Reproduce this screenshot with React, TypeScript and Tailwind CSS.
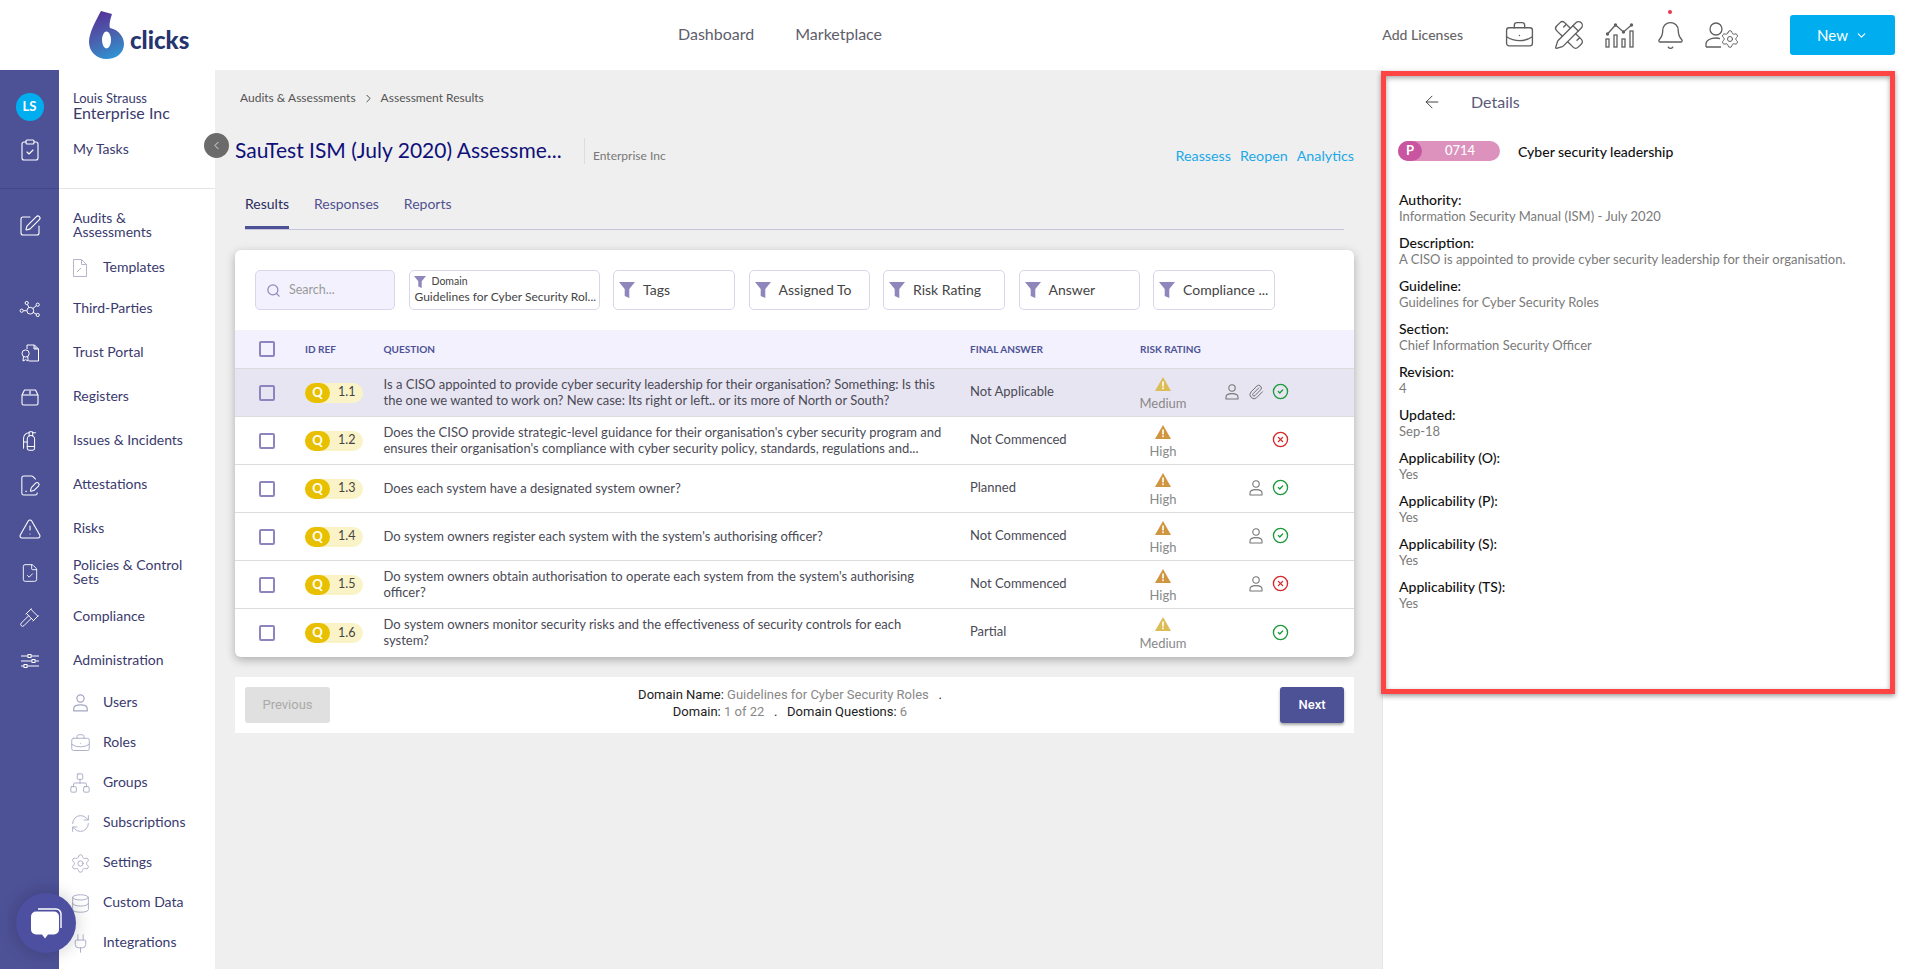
import React from "react";
import {
  BriefcaseBusiness, PencilRuler, Bell, Settings, ChevronDown, ChevronLeft, ChevronRight, ClipboardCheck, SquarePen,
  FireExtinguisher, TriangleAlert, FileCheck, Gavel, Network, RefreshCw, Database, Plug,
  Search, Paperclip, CircleCheck, CircleX, ArrowLeft, FileSignature,
} from "lucide-react";

const railIcon = "text-white";

function Funnel({ small }: { small?: boolean }) {
  return (
    <svg viewBox="0 0 16 16" className={small ? "w-[12px] h-[12px] shrink-0" : "w-[16px] h-[16px] shrink-0"}>
      <path d="M0 0h16L10.3 7v9L5.7 14V7z" fill="#8f87bb" />
    </svg>
  );
}

function Warn({ color }: { color: string }) {
  return (
    <svg viewBox="0 0 16 14" className="w-[16px] h-[14px]">
      <path d="M8 0L16 14H0z" fill={color} />
      <rect x="7.2" y="4.5" width="1.6" height="5" fill="#fff" />
      <rect x="7.2" y="10.5" width="1.6" height="1.6" fill="#fff" />
    </svg>
  );
}

function Person({ stroke = "#777", big }: { stroke?: string; big?: boolean }) {
  return (
    <svg viewBox="0 0 14 16" className={big ? "w-[17px] h-[18px]" : "w-[14px] h-[16px]"} fill="none" stroke={stroke} strokeWidth="1.1">
      <circle cx="7" cy="4" r="3.2" />
      <path d="M1 15v-2c0-2 2.5-3.4 6-3.4s6 1.4 6 3.4v2z" strokeLinejoin="round" />
    </svg>
  );
}

function NetworkIcon() {
  return (
    <svg viewBox="18 301 21 18" className="w-[21px] h-[18px]" fill="none" stroke="#fff" strokeWidth="1">
      <circle cx="29.3" cy="311.7" r="3.4" />
      <circle cx="25.7" cy="304" r="1.6" />
      <circle cx="36.7" cy="305.7" r="1.6" />
      <circle cx="36.7" cy="316" r="1.6" />
      <circle cx="20.7" cy="311.7" r="1.6" />
      <path d="M26.5 305.5l1.4 3M35.4 306.7l-3.6 2.8M35.3 315.2l-3.4-2M22.4 311.7h3.5" />
    </svg>
  );
}

function TrustIcon() {
  return (
    <svg viewBox="0 0 18 18" className="w-[18px] h-[18px]" fill="none" stroke="#fff" strokeWidth="1">
      <path d="M6 5V1h7.5L17.5 5v12H8" />
      <path d="M13.5 1v4h4" fill="#b9bbdd" stroke="none" />
      <path d="M13 1v4h4.5" />
      <circle cx="4.6" cy="9.5" r="3.6" />
      <path d="M2.5 12.5L2 17l2.6-1.3L7.2 17l-.5-4.5" />
    </svg>
  );
}

function BoxIcon() {
  return (
    <svg viewBox="0 0 18 17" className="w-[18px] h-[17px]" fill="none" stroke="#fff" strokeWidth="1.1">
      <path d="M1 6L3.5 1h11L17 6v8.5a1.5 1.5 0 0 1-1.5 1.5h-13A1.5 1.5 0 0 1 1 14.5z" strokeLinejoin="round" />
      <path d="M1 6h16" />
      <rect x="8" y="1" width="2" height="5" fill="#b9bbdd" stroke="none" />
    </svg>
  );
}

function SlidersIcon() {
  return (
    <svg viewBox="0 0 18 14" className="w-[18px] h-[14px]" fill="none" stroke="#fff" strokeWidth="1">
      <path d="M0 2h7M10 2h8M0 7h11M14 7h4M0 12h3M6 12h12" />
      <rect x="7" y="0.5" width="3" height="3" />
      <rect x="11" y="5.5" width="3" height="3" />
      <rect x="3" y="10.5" width="3" height="3" />
    </svg>
  );
}

function RowItem({ icon, sub, h, children, cls }: { icon?: React.ReactNode; sub?: React.ReactNode; h: string; children?: React.ReactNode; cls?: string }) {
  return (
    <div className={`flex shrink-0 ${h}`}>
      <div className={`w-[59px] shrink-0 bg-[#4d5196] flex items-center justify-center ${cls ?? ""}`}>{icon}</div>
      <div className={`flex-1 flex items-center text-[14px] leading-[14px] text-[#3a3a6e] ${cls ?? ""} ${sub ? "" : "pl-[14px]"}`}>
        {sub ? (
          <>
            <div className="w-[40px] pl-[2px] flex justify-center text-[#a4a6c2] shrink-0">{sub}</div>
            <div className="pl-[4px] relative -top-px">{children}</div>
          </>
        ) : (
          <div className="relative -top-px">{children}</div>
        )}
      </div>
    </div>
  );
}

function Sidebar() {
  return (
    <aside className="w-[215px] shrink-0 flex flex-col bg-white">
      <div className="flex h-[59px] shrink-0">
        <div className="w-[59px] bg-[#4d5196] pt-[23px] flex justify-center">
          <div className="w-[28px] h-[28px] rounded-full bg-[#00aeef] text-white text-[13px] font-bold flex items-center justify-center">LS</div>
        </div>
        <div className="pl-[14px] pt-[21px] text-[#3a3a6e]">
          <div className="text-[13px] leading-[14px]">Louis Strauss</div>
          <div className="text-[16px] leading-[16px]">Enterprise Inc</div>
        </div>
      </div>
      <RowItem h="h-[42px]" icon={<ClipboardCheck size={24} strokeWidth={1.1} className={railIcon} />}>My Tasks</RowItem>
      <div className="flex h-[18px] shrink-0 border-b border-[#e3e3e8]">
        <div className="w-[59px] bg-[#4d5196] -mb-px border-b border-[#44478a]" />
      </div>
      <RowItem h="h-[59px]" cls="pt-[15px]" icon={<SquarePen size={24} strokeWidth={1.1} className={railIcon} />}>
        <span>Audits &amp;<br />Assessments</span>
      </RowItem>
      <RowItem
        h="h-[39px]"
        sub={
          <svg viewBox="0 0 14 18" className="w-[14px] h-[18px]" fill="none" stroke="#b4b6cc" strokeWidth="1">
            <path d="M.5.5h8l5 5v12H.5z" />
            <path d="M8.5.5v5h5M4 13l4-4" />
          </svg>
        }
      >
        Templates
      </RowItem>
      <RowItem h="h-[44px]" icon={<NetworkIcon />}>Third-Parties</RowItem>
      <RowItem h="h-[44px]" icon={<TrustIcon />}>Trust Portal</RowItem>
      <RowItem h="h-[44px]" icon={<BoxIcon />}>Registers</RowItem>
      <RowItem h="h-[44px]" icon={<FireExtinguisher size={22} strokeWidth={1.1} className={railIcon} />}>Issues &amp; Incidents</RowItem>
      <RowItem h="h-[44px]" icon={<FileSignature size={23} strokeWidth={1.1} className={railIcon} />}>Attestations</RowItem>
      <RowItem h="h-[44px]" icon={<TriangleAlert size={24} strokeWidth={1.1} className={railIcon} />}>Risks</RowItem>
      <RowItem h="h-[44px]" icon={<FileCheck size={20} strokeWidth={1.1} className={railIcon} />}>
        <span>Policies &amp; Control<br />Sets</span>
      </RowItem>
      <RowItem h="h-[44px]" icon={<Gavel size={21} strokeWidth={1.1} className={railIcon} />}>Compliance</RowItem>
      <RowItem h="h-[44px]" icon={<SlidersIcon />}>Administration</RowItem>
      <RowItem h="h-[40px]" sub={<Person stroke="#a4a6c2" big />}>Users</RowItem>
      <RowItem h="h-[40px]" sub={<BriefcaseBusiness size={21} strokeWidth={1} />}>Roles</RowItem>
      <RowItem h="h-[40px]" sub={<Network size={22} strokeWidth={1} />}>Groups</RowItem>
      <RowItem h="h-[40px]" sub={<RefreshCw size={21} strokeWidth={1} />}>Subscriptions</RowItem>
      <RowItem h="h-[40px]" sub={<Settings size={21} strokeWidth={1} />}>Settings</RowItem>
      <RowItem h="h-[40px]" sub={<Database size={21} strokeWidth={1} />}>Custom Data</RowItem>
      <RowItem h="h-[40px]" sub={<Plug size={21} strokeWidth={1} />}>Integrations</RowItem>
      <div className="flex flex-1"><div className="w-[59px] bg-[#4d5196]" /></div>
    </aside>
  );
}

function Header() {
  return (
    <header className="h-[70px] flex items-center bg-white shrink-0 pr-[25px]">
      <div className="w-[678px] shrink-0 pl-[89px] flex items-start h-full pt-[11px]">
        <svg viewBox="0 0 35 48" className="w-[35px] h-[48px] shrink-0">
          <defs>
            <linearGradient id="lg" x1="0.3" y1="0" x2="0.6" y2="1">
              <stop offset="0" stopColor="#55319a" />
              <stop offset="0.55" stopColor="#4a62ae" />
              <stop offset="1" stopColor="#2f92d2" />
            </linearGradient>
          </defs>
          <path d="M12 0L23 3C21 9 20 14 21 17C30 19 35 26 35 33C35 42 27 48 17.5 48C8 48 0 41 0 31C0 22 7 9 12 0Z" fill="url(#lg)" />
          <ellipse cx="17.5" cy="29" rx="4.5" ry="8.5" fill="#fff" />
        </svg>
        <span className="ml-[6px] mt-[17px] text-[24px] leading-[24px] font-black text-[#25346f]">clicks</span>
      </div>
      <nav className="flex gap-[41px] text-[16px] text-[#5e5e6c] relative -top-px">
        <span>Dashboard</span>
        <span>Marketplace</span>
      </nav>
      <div className="ml-auto flex items-center">
        <span className="text-[14px] font-medium text-[#666] mr-[31px] relative -top-px">Add Licenses</span>
        <div className="flex items-center text-[#5f5f5f] mr-[39px]">
          <div className="w-[50px] flex justify-center"><BriefcaseBusiness size={31} strokeWidth={1.05} /></div>
          <div className="w-[49px] flex justify-center"><PencilRuler size={32} strokeWidth={1} /></div>
          <div className="w-[54px] flex justify-center">
            <svg viewBox="0 0 30 26" className="w-[30px] h-[26px]" fill="none" stroke="#5f5f5f" strokeWidth="1.3">
              <rect x="1" y="17" width="3" height="8" />
              <rect x="9" y="13" width="3" height="12" />
              <rect x="17" y="17" width="3" height="8" />
              <rect x="25" y="9" width="3" height="16" />
              <path d="M2.5 12L10.5 3L18.5 10L26.5 3" />
              <circle cx="2.5" cy="12" r="1" fill="#5f5f5f" />
              <circle cx="10.5" cy="3" r="1" fill="#5f5f5f" />
              <circle cx="18.5" cy="10" r="1" fill="#5f5f5f" />
              <circle cx="26.5" cy="3" r="1" fill="#5f5f5f" />
            </svg>
          </div>
          <div className="w-[46px] flex justify-center relative">
            <Bell size={31} strokeWidth={1.05} />
            <div className="absolute left-[21px] -top-[10px] w-[4px] h-[4px] rounded-full bg-[#ee3350]" />
          </div>
          <div className="w-[58px] flex justify-center">
            <div className="relative w-[34px] h-[26px]">
              <svg viewBox="0 0 34 26" className="w-[34px] h-[26px]" fill="none" stroke="#5f5f5f" strokeWidth="1.3">
                <circle cx="11" cy="7" r="6" />
                <path d="M1 25v-3c0-4 5-6 10-6 2 0 3 .3 4 .6M1 25h15" />
              </svg>
              <Settings size={20} strokeWidth={1.2} className="absolute -right-[1px] -bottom-[1px]" />
            </div>
          </div>
        </div>
        <button className="w-[105px] h-[40px] rounded-[3px] bg-[#00aeef] text-white text-[15px] flex items-center justify-center gap-[7px]">
          New <ChevronDown size={13} strokeWidth={2} />
        </button>
      </div>
    </header>
  );
}

const rows = [
  { id: "1.1", q: "Is a CISO appointed to provide cyber security leadership for their organisation? Something: Is this the one we wanted to work on? New case: Its right or left.. or its more of North or South?", a: "Not Applicable", r: "Medium", user: true, clip: true, ok: true, active: true },
  { id: "1.2", q: "Does the CISO provide strategic-level guidance for their organisation's cyber security program and ensures their organisation's compliance with cyber security policy, standards, regulations and...", a: "Not Commenced", r: "High", ok: false },
  { id: "1.3", q: "Does each system have a designated system owner?", a: "Planned", r: "High", user: true, ok: true },
  { id: "1.4", q: "Do system owners register each system with the system's authorising officer?", a: "Not Commenced", r: "High", user: true, ok: true },
  { id: "1.5", q: "Do system owners obtain authorisation to operate each system from the system's authorising officer?", a: "Not Commenced", r: "High", user: true, ok: false },
  { id: "1.6", q: "Do system owners monitor security risks and the effectiveness of security controls for each system?", a: "Partial", r: "Medium", ok: true },
];

function Check() {
  return <div className="w-[16px] h-[16px] border-2 border-[#8f83c0] rounded-[2px] bg-transparent" />;
}

function FilterBox({ w, label }: { w: string; label: string }) {
  return (
    <div className={`${w} h-[40px] shrink-0 border border-[#d9d6ec] rounded-[5px] flex items-center pl-[5px] gap-[8px] text-[14px] text-[#444]`}>
      <Funnel />
      <span className="relative -top-px">{label}</span>
    </div>
  );
}

const gridCls = "grid grid-cols-[70px_78.5px_586.5px_170px_46px_34px_24px_24px_24px] items-center";

function Table() {
  return (
    <div>
      <div className={`${gridCls} h-[39px] bg-[#f3f1fd] border-b border-[#dcdcdc] text-[10px] font-bold text-[#4d5196] uppercase`}>
        <div className="pl-[24px]"><Check /></div>
        <div>ID Ref</div>
        <div>Question</div>
        <div>Final Answer</div>
        <div className="whitespace-nowrap">Risk Rating</div>
      </div>
      {rows.map((r, i) => (
        <div key={r.id} className={`${gridCls} h-[48px] ${i < rows.length - 1 ? "border-b border-[#dddddd]" : ""} ${r.active ? "bg-[#e8e5f2]" : ""}`}>
          <div className="pl-[24px]"><Check /></div>
          <div className="w-[58px] h-[20px] rounded-full bg-[#fbf3c8] flex items-center">
            <div className="w-[25px] h-[20px] rounded-full bg-[#e8c000] text-white text-[13px] font-bold flex items-center justify-center">Q</div>
            <div className="pl-[8px] text-[12.5px] text-[#444]">{r.id}</div>
          </div>
          <div className="w-[562px] text-[13px] leading-[16px] text-[#4a4a55] relative -top-px">{r.q}</div>
          <div className="text-[13px] text-[#4a4a55] relative -top-px">{r.a}</div>
          <div className="flex flex-col items-center gap-[4px] whitespace-nowrap relative top-[1px]">
            <Warn color={r.r === "Medium" ? "#dcbc55" : "#cf9540"} />
            <div className="text-[13px] leading-[16px] text-[#888]">{r.r}</div>
          </div>
          <div />
          <div className="flex justify-center relative -top-px">{r.user && r.clip ? <Person /> : null}</div>
          <div className="flex justify-center relative -top-px">
            {r.clip ? <Paperclip size={16} strokeWidth={1.5} className="text-[#6f6f6f]" /> : r.user ? <Person /> : null}
          </div>
          <div className="flex justify-center relative -top-px">
            {r.ok ? <CircleCheck size={17} strokeWidth={1.9} className="text-[#1a9a3a]" /> : <CircleX size={17} strokeWidth={1.9} className="text-[#d62828]" />}
          </div>
        </div>
      ))}
    </div>
  );
}

function Main() {
  return (
    <main className="relative flex-1 min-w-0 bg-[#efefef] pl-[20px] pr-[28px]">
      <button className="absolute -left-[11.5px] top-[62.5px] w-[25px] h-[25px] rounded-full bg-[#6b6b6b] text-white flex items-center justify-center z-10">
        <ChevronLeft size={13} strokeWidth={1.4} />
      </button>
      <div className="mt-[20px] pl-[5px] h-[16px] flex items-center text-[12px] text-[#555]">
        <span>Audits &amp; Assessments</span>
        <ChevronRight size={13} strokeWidth={1.6} className="mx-[6px] text-[#333]" />
        <span>Assessment Results</span>
      </div>
      <div className="mt-[25px] h-[40px] flex items-center relative -top-px">
        <h1 className="text-[21px] text-[#10107a] w-[349px] whitespace-nowrap shrink-0">SauTest ISM (July 2020) Assessme...</h1>
        <div className="border-l border-[#dcdcdc] h-[26px] mt-[2px] pl-[8px] pt-[10px] text-[12px] leading-[16px] text-[#777]">Enterprise Inc</div>
        <div className="ml-auto flex gap-[9px] text-[14.3px] text-[#1ba9e8] pt-[12px]">
          <span>Reassess</span>
          <span>Reopen</span>
          <span>Analytics</span>
        </div>
      </div>
      <div className="mt-[10px] mx-[10px] h-[49px] border-b border-[#c5c5dc] flex gap-[25px] text-[14px]">
        <div className="relative h-[44px] flex items-center text-[#2b2b5e]">
          Results
          <div className="absolute left-0 right-0 -bottom-[4px] h-[3px] bg-[#4d5196]" />
        </div>
        <div className="h-[44px] flex items-center text-[#52528f]">Responses</div>
        <div className="h-[44px] flex items-center text-[#52528f]">Reports</div>
      </div>
      <section className="mt-[20px] bg-white rounded-[6px] shadow-[0_3px_10px_rgba(0,0,0,0.28)] overflow-hidden">
        <div className="flex gap-[13.5px] pl-[20px] pt-[20px] pb-[20px]">
          <div className="w-[140px] h-[40px] shrink-0 border border-[#d9d6ec] rounded-[5px] bg-[#f3f1fd] flex items-center pl-[10px] gap-[8px]">
            <Search size={15} strokeWidth={2} className="text-[#8f87bb]" />
            <span className="text-[12.5px] text-[#9a9a9a]">Search...</span>
          </div>
          <div className="w-[191px] h-[40px] shrink-0 border border-[#d9d6ec] rounded-[5px] pl-[4px] text-[#444]">
            <div className="flex items-center gap-[6px] pt-[3px] h-[18px] text-[10.5px]"><Funnel small /><span>Domain</span></div>
            <div className="pl-[1px] text-[12px] leading-[17px] whitespace-nowrap relative -top-px">Guidelines for Cyber Security Rol...</div>
          </div>
          <FilterBox w="w-[122px]" label="Tags" />
          <FilterBox w="w-[121px]" label="Assigned To" />
          <FilterBox w="w-[122px]" label="Risk Rating" />
          <FilterBox w="w-[121px]" label="Answer" />
          <FilterBox w="w-[122px]" label="Compliance ..." />
        </div>
        <Table />
      </section>
      <div className="mt-[20px] h-[56px] bg-white flex items-center justify-between px-[10px] [font-family:Roboto,sans-serif]">
        <button className="w-[85px] h-[36px] rounded-[3px] bg-[#e0e0e0] text-[13px] text-[#aaaaaa]">Previous</button>
        <div className="text-center text-[13px] leading-[17px] text-[#222] pr-[30px] relative -top-[2px]">
          <div>Domain Name: <span className="text-[#888]">Guidelines for Cyber Security Roles</span> &nbsp;&nbsp;.</div>
          <div>Domain: <span className="text-[#888]">1 of 22</span> &nbsp;&nbsp;.&nbsp;&nbsp; Domain Questions: <span className="text-[#888]">6</span></div>
        </div>
        <button className="w-[64px] h-[36px] rounded-[3px] bg-[#4d5196] text-[13px] font-medium text-white shadow-[0_2px_3px_rgba(0,0,0,0.35)]">Next</button>
      </div>
    </main>
  );
}

const fields = [
  ["Authority:", "Information Security Manual (ISM) - July 2020"],
  ["Description:", "A CISO is appointed to provide cyber security leadership for their organisation."],
  ["Guideline:", "Guidelines for Cyber Security Roles"],
  ["Section:", "Chief Information Security Officer"],
  ["Revision:", "4"],
  ["Updated:", "Sep-18"],
  ["Applicability (O):", "Yes"],
  ["Applicability (P):", "Yes"],
  ["Applicability (S):", "Yes"],
  ["Applicability (TS):", "Yes"],
];

function Details() {
  return (
    <aside className="relative w-[538px] shrink-0 bg-white border-l border-[#e5e5e5]">
      <div className="absolute -left-[2px] top-px w-[514px] h-[623px] border-[5px] border-[#ff4444] shadow-[0_2px_5px_rgba(0,0,0,0.4),inset_0_2px_5px_rgba(0,0,0,0.35)] pointer-events-none" />
      <div className="mt-[19px] h-[26px] pl-[39px] flex items-center text-[#5a5a7a]">
        <ArrowLeft size={20} strokeWidth={1.2} className="text-[#444]" />
        <span className="ml-[29px] text-[16px]">Details</span>
      </div>
      <div className="mt-[26px] pl-[15px] flex items-center h-[20px]">
        <div className="relative w-[102px] h-[20px] rounded-full bg-[#dc92bc] text-white text-[13px] font-medium flex items-center">
          <div className="w-[24px] h-[20px] rounded-full bg-[#c9549f] font-bold flex items-center justify-center">P</div>
          <span className="ml-[23px]">0714</span>
        </div>
        <span className="ml-[18px] text-[14px] font-medium text-[#111]">Cyber security leadership</span>
      </div>
      <div className="mt-[31px] pl-[16px] flex flex-col gap-[11px]">
        {fields.map(([k, v]) => (
          <div key={k}>
            <div className="text-[14px] leading-[16px] font-medium text-[#111]">{k}</div>
            <div className="text-[13px] leading-[16px] text-[#7a7a7a]">{v}</div>
          </div>
        ))}
      </div>
    </aside>
  );
}

export default function App() {
  return (
    <div className="relative w-full h-[969px] overflow-hidden flex flex-col bg-white [font-family:Lato,sans-serif]">
      <Header />
      <div className="flex flex-1 min-h-0">
        <Sidebar />
        <Main />
        <Details />
      </div>
      <div className="absolute left-[16px] top-[893px] w-[60px] h-[60px] rounded-full bg-[#4d4fa0] shadow-[0_0_18px_rgba(0,0,0,0.2)] flex items-center justify-center z-20">
        <svg viewBox="0 0 32 31" className="w-[32px] h-[31px]">
          <path d="M8 1h18a5 5 0 0 1 5 5v14" fill="none" stroke="#fff" strokeWidth="1.4" />
          <path d="M6 3.5h18a5 5 0 0 1 5 5v13a5 5 0 0 1-5 5h-6l-3 4-3-4H6a5 5 0 0 1-5-5v-13a5 5 0 0 1 5-5z" fill="#fff" />
        </svg>
      </div>
    </div>
  );
}
